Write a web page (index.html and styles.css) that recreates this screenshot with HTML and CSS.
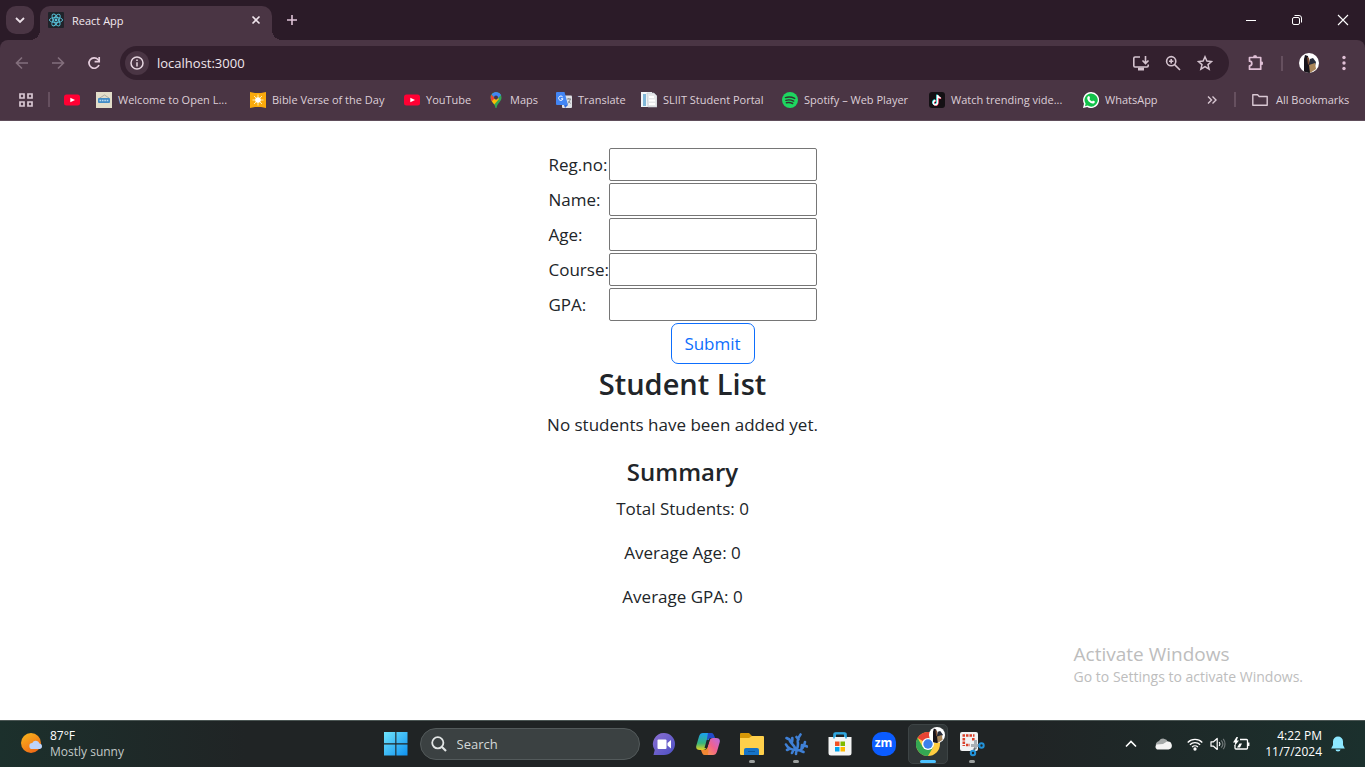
FILE: index.html
```html
<!DOCTYPE html>
<html lang="en">
<head>
<meta charset="utf-8">
<title>React App</title>
<link rel="stylesheet" href="styles.css">
</head>
<body>
<header class="browser">
  <div class="titlebar">
    <button class="tab-search" aria-label="Search tabs"><svg width="12" height="12" viewBox="0 0 12 12" fill="none" stroke="#ece0e8" stroke-width="1.800"><path d="M2 4l4 4 4-4"/></svg></button>
    <div class="tab">
      <svg width="16" height="16" viewBox="0 0 16 16"><rect width="16" height="16" rx="1" fill="#20232a"/><g fill="none" stroke="#58c4dc" stroke-width=".9"><ellipse cx="8" cy="8" rx="6.6" ry="2.6"/><ellipse cx="8" cy="8" rx="6.6" ry="2.6" transform="rotate(60 8 8)"/><ellipse cx="8" cy="8" rx="6.6" ry="2.6" transform="rotate(120 8 8)"/></g><circle cx="8" cy="8" r="1.4" fill="#58c4dc"/></svg>
      <span class="tab-title">React App</span>
      <button class="icon-btn tab-close" aria-label="Close tab"><svg width="10" height="10" viewBox="0 0 10 10" stroke="#f0e4ec" stroke-width="1.6"><path d="M1.5 1.5l7 7M8.500 1.500l-7 7"/></svg></button>
    </div>
    <button class="icon-btn new-tab" aria-label="New tab"><svg width="12" height="12" viewBox="0 0 12 12" stroke="#e0c4d8" stroke-width="1.6"><path d="M6 1v10M1 6h10"/></svg></button>
    <div class="window-controls">
      <button class="icon-btn" aria-label="Minimize"><svg width="12" height="12" viewBox="0 0 12 12" stroke="#fff"><path d="M1 6.500h10"/></svg></button>
      <button class="icon-btn" aria-label="Restore"><svg width="12" height="12" viewBox="0 0 12 12" fill="none" stroke="#fff"><rect x="1.500" y="3.500" width="7" height="7" rx="1.500"/><path d="M3.500 1.500H8a2.500 2.500 0 0 1 2.500 2.500v4.500"/></svg></button>
      <button class="icon-btn" aria-label="Close"><svg width="12" height="12" viewBox="0 0 12 12" stroke="#fff" stroke-width="1.100"><path d="M1 1l10 10M11 1L1 11"/></svg></button>
    </div>
  </div>
  <div class="toolbar">
    <button class="icon-btn nav" aria-label="Back"><svg width="16" height="16" viewBox="0 0 16 16" fill="none" stroke="#836f7d" stroke-width="1.600"><path d="M14 8H3M8 2.500L2.500 8 8 13.500"/></svg></button>
    <button class="icon-btn nav" aria-label="Forward"><svg width="16" height="16" viewBox="0 0 16 16" fill="none" stroke="#836f7d" stroke-width="1.600"><path d="M2 8h11M8 2.500L13.500 8 8 13.500"/></svg></button>
    <button class="icon-btn nav" aria-label="Reload"><svg width="16" height="16" viewBox="0 0 16 16" fill="none" stroke="#e6cede" stroke-width="1.700"><path d="M13 10A5.200 5.200 0 1 1 12 4.500L13.500 6"/><path d="M13.200 2v4.600H8.600"/></svg></button>
    <div class="omnibox">
      <button class="icon-btn site-info" aria-label="Site information"><svg width="14" height="14" viewBox="0 0 14 14" fill="none" stroke="#e6d6e0" stroke-width="1.500"><circle cx="7" cy="7" r="6"/><path d="M7 6.200V10.500M7 3.500v1.500"/></svg></button>
      <input class="address" type="text" value="localhost:3000" aria-label="Address">
      <button class="icon-btn omni-btn" aria-label="Install"><svg width="18" height="16" viewBox="0 0 18 16" fill="none" stroke="#d5c3cf" stroke-width="1.600"><path d="M8 2H3a1.200 1.200 0 0 0-1.200 1.200v7.600A1.200 1.200 0 0 0 3 12h12a1.200 1.200 0 0 0 1.200-1.200V9.500M13.500 1v7M10.500 5.500l3 3 3-3"/><path d="M6 14h6" stroke-width="3"/></svg></button>
      <button class="icon-btn omni-btn" aria-label="Zoom"><svg width="16" height="16" viewBox="0 0 16 16" fill="none" stroke="#d5c3cf" stroke-width="1.600"><circle cx="6.200" cy="6.200" r="4.600"/><path d="M9.600 9.600L15 15M6.200 4v4.400M4 6.200h4.400"/></svg></button>
      <button class="icon-btn omni-btn" aria-label="Bookmark this tab"><svg width="16" height="16" viewBox="0 0 16 16" fill="none" stroke="#d5c3cf" stroke-width="1.500"><path d="M8 1.800l1.900 4.300 4.600.4-3.500 3.100 1.100 4.600L8 11.700l-4.100 2.500L5 9.600 1.500 6.500l4.600-.4z"/></svg></button>
    </div>
    <button class="icon-btn tool" aria-label="Extensions"><svg width="18" height="18" viewBox="0 0 18 18" fill="none" stroke="#e0c0d6" stroke-width="1.700"><path d="M2.500 3.500h11.200v11.700H2.500v-3.400a2.300 2.300 0 0 0 0-4.600z" stroke-linejoin="round"/><path d="M6.300 3a1.800 1.800 0 0 1 3.600 0zM14 7.500a1.800 1.800 0 0 1 0 3.600z" fill="#e0c0d6" stroke="none"/><path d="M6.500 2.300h3M15 7.800v3" /></svg></button>
    <span class="divider"></span>
    <button class="icon-btn tool" aria-label="Profile"><svg width="20" height="20" viewBox="0 0 20 20"><clipPath id="face"><circle cx="10" cy="10" r="10"/></clipPath><g clip-path="url(#face)"><path fill="#fff" d="M0 0h20v20H0z"/><path fill="#17131a" d="M5 6l1-4 3 1 1 6 2 3-1 8H5z"/><path fill="#7b4e36" d="M8 4l2 1 1 5-2 2z"/><path fill="#282d3b" d="M11 6l3-1 3 4-1 4-6-1z"/><path fill="#a98558" d="M10 12l6-2 1 6-6 4z"/></g></svg></button>
    <button class="icon-btn tool" aria-label="Menu"><svg width="4" height="16" viewBox="0 0 4 16" fill="#e0c0d6"><circle cx="2" cy="2.500" r="1.700"/><circle cx="2" cy="8" r="1.700"/><circle cx="2" cy="13.500" r="1.700"/></svg></button>
  </div>
  <nav class="bookmarks" aria-label="Bookmarks">
    <button class="icon-btn apps" aria-label="Apps"><svg width="14" height="14" viewBox="0 0 14 14" fill="none" stroke="#d9c8d3" stroke-width="1.700"><path d="M1 1h4v4H1zM9 1h4v4H9zM1 9h4v4H1zM9 9h4v4H9z"/></svg></button>
    <span class="divider"></span>
    <div class="bookmark-list">
      <a class="bookmark" href="#" aria-label="YouTube shortcut"><svg width="16" height="16" viewBox="0 0 16 16"><rect y="2.500" width="16" height="11" rx="2.500" fill="#ff0033"/><path fill="#fff" d="M6.300 5.700L11 8l-4.700 2.300z"/></svg></a>
      <a class="bookmark" href="#"><svg width="16" height="16" viewBox="0 0 16 16"><path fill="#e2ddc9" d="M0 0h16v16H0z"/><path d="M3 6.500L8.500 3 13 6" stroke="#888" stroke-width=".6" fill="none"/><rect x="2" y="6" width="12" height="5" rx="1" fill="#418bc5"/><path d="M3.500 8.500h9" stroke="#b8d9ef" stroke-width="1.600" stroke-dasharray="1.600 .8"/></svg><span>Welcome to Open L...</span></a>
      <a class="bookmark" href="#"><svg width="16" height="16" viewBox="0 0 16 16"><path fill="#faaa0c" d="M0 0l5 1h6l5-1v16l-5-1H5l-5 1z"/><path d="M8 2.500v11M2.500 8h11M4 4l8 8M12 4l-8 8" stroke="#ffeeb0"/><circle cx="8" cy="8" r="2.800" fill="#fff"/></svg><span>Bible Verse of the Day</span></a>
      <a class="bookmark" href="#"><svg width="16" height="16" viewBox="0 0 16 16"><rect y="2.500" width="16" height="11" rx="2.500" fill="#ff0033"/><path fill="#fff" d="M6.300 5.700L11 8l-4.700 2.300z"/></svg><span>YouTube</span></a>
      <a class="bookmark" href="#"><svg width="16" height="16" viewBox="0 0 16 16"><clipPath id="pin"><path d="M8 0a5.500 5.500 0 0 1 5.500 5.500c0 4-4.200 5.500-5 10.500h-1c-.8-5-5-6.500-5-10.500A5.500 5.500 0 0 1 8 0z"/></clipPath><g clip-path="url(#pin)"><path fill="#34a853" d="M0 0h16v16H0z"/><path fill="#fbbc04" d="M2 10.500L8 4l3 3-6 7z"/><path fill="#ea4335" d="M2 2l5 4-4 4z"/><path fill="#4285f4" d="M3.500 2L8-1l6 3-6 6z"/></g><circle cx="8" cy="5.500" r="2" fill="#4a3544"/></svg><span>Maps</span></a>
      <a class="bookmark" href="#"><svg width="16" height="16" viewBox="0 0 16 16"><rect x="6" y="3.500" width="10" height="12.500" rx="1" fill="#dfe1e5"/><path fill="#3367d6" d="M8 13h4l-3 3z"/><path fill="#4285f4" d="M1 0h7.500L12 13H1a1 1 0 0 1-1-1V1a1 1 0 0 1 1-1z"/><path d="M6.700 5A2.200 2.200 0 1 0 7 6.800H5" fill="none" stroke="#fff"/><path d="M11 7h4M12.800 6v1M14.300 7c-.5 2-1.500 3.500-2.500 4.500M12.500 9l2 2.500" fill="none" stroke="#70757a" stroke-width=".8"/></svg><span>Translate</span></a>
      <a class="bookmark" href="#"><svg width="16" height="16" viewBox="0 0 16 16"><path fill="#f3f5f8" d="M0 0h11v15H0z"/><path fill="#81b7d8" d="M2 2h3v12H2z"/><path fill="#e6e8ea" stroke="#bdc5cc" stroke-width=".6" d="M6 1h7l3 3v11H7z"/><path stroke="#fff" stroke-width="2" d="M8 5h5M8 8.500h6M8 12h6"/></svg><span>SLIIT Student Portal</span></a>
      <a class="bookmark" href="#"><svg width="16" height="16" viewBox="0 0 16 16"><circle cx="8" cy="8" r="8" fill="#1ed760"/><path d="M3.400 5.600c3-1 6.500-.6 9.300.8M3.900 8.300c2.700-.8 5.400-.4 7.800.8M4.400 10.800c2.200-.6 4.300-.3 6.300.7" fill="none" stroke="#30362f" stroke-width="1.400" stroke-linecap="round"/></svg><span>Spotify – Web Player</span></a>
      <a class="bookmark" href="#"><svg width="16" height="16" viewBox="0 0 16 16"><rect width="16" height="16" rx="3" fill="#141014"/><g fill="none" stroke-width="1.500"><path d="M8 2.500v7.600a2.100 2.100 0 1 1-2-2M8 3c.5 1.700 1.700 2.500 3.200 2.600" stroke="#25f4ee"/><path d="M9 3.300v7.600a2.100 2.100 0 1 1-2-2M9 3.800c.5 1.700 1.700 2.500 3.200 2.600" stroke="#fe2c55"/><path d="M8.500 3v7.600a2.100 2.100 0 1 1-2-2M8.500 3.300c.5 1.700 1.700 2.500 3.200 2.600" stroke="#fff"/></g></svg><span>Watch trending vide...</span></a>
      <a class="bookmark" href="#"><svg width="16" height="16" viewBox="0 0 16 16"><path fill="#fff" d="M8 0a8 8 0 1 1-3.800 15L0 16l1-4.200A8 8 0 0 1 8 0z"/><path fill="#12c24a" d="M8 1.400a6.600 6.600 0 1 1-3.300 12.200L2 14.200l.6-2.600A6.600 6.600 0 0 1 8 1.400z"/><path fill="#fff" d="M5.200 4.200l1-.1.900 2-.7 1c.6 1.200 1.500 2 2.700 2.500l.9-1 1.900.9c.1 1.300-1 2.200-2.200 2.100C7 11.300 4.500 8.700 4.200 6.300c0-.9.400-1.700 1-2.100z"/></svg><span>WhatsApp</span></a>
    </div>
    <button class="icon-btn more" aria-label="More bookmarks"><svg width="10" height="8" viewBox="0 0 10 8" fill="none" stroke="#d9c8d3" stroke-width="1.400"><path d="M1 .5L4.500 4 1 7.500M5.500.5L9 4 5.500 7.500"/></svg></button>
    <span class="divider"></span>
    <a class="bookmark all" href="#"><svg width="16" height="14" viewBox="0 0 16 14" fill="none" stroke="#d9c8d3" stroke-width="1.400" stroke-linejoin="round"><path d="M.8 12.200V1.800h4.800l1.600 1.700h8v8.700z"/></svg><span>All Bookmarks</span></a>
  </nav>
</header>

<main class="page">
  <form class="student-form">
    <label for="regno">Reg.no:</label><input class="field" id="regno" type="text">
    <label for="name">Name:</label><input class="field" id="name" type="text">
    <label for="age">Age:</label><input class="field" id="age" type="text">
    <label for="course">Course:</label><input class="field" id="course" type="text">
    <label for="gpa">GPA:</label><input class="field" id="gpa" type="text">
    <button class="submit" type="button">Submit</button>
  </form>
  <h2 class="list-title">Student List</h2>
  <p class="line">No students have been added yet.</p>
  <h3 class="summary-title">Summary</h3>
  <p class="line">Total Students: 0</p>
  <p class="line">Average Age: 0</p>
  <p class="line">Average GPA: 0</p>
  <aside class="watermark">
    <div class="watermark-title">Activate Windows</div>
    <div class="watermark-text">Go to Settings to activate Windows.</div>
  </aside>
</main>

<footer class="taskbar">
  <button class="weather">
    <svg width="22" height="22" viewBox="0 0 22 22"><defs><linearGradient id="sun" x1="0" y1="0" x2=".6" y2="1"><stop stop-color="#f9b91d"/><stop offset="1" stop-color="#f06b16"/></linearGradient></defs><circle cx="10" cy="10" r="10" fill="url(#sun)"/><path fill="#bdd3f8" d="M11.500 16a3 3 0 0 1-.3-6 4 4 0 0 1 7.300.5A2.800 2.800 0 0 1 19 16z"/></svg>
    <span class="weather-text"><span>87°F</span><span class="sky">Mostly sunny</span></span>
  </button>
  <div class="apps-row">
    <button class="app" aria-label="Start"><svg width="24" height="24" viewBox="0 0 24 24"><defs><linearGradient id="win" x1="0" y1="0" x2="1" y2="1" ><stop stop-color="#6fe4fc"/><stop offset="1" stop-color="#0c8ff0"/></linearGradient><mask id="panes"><path fill="#fff" d="M0 0h11.300v11.300H0zM12.400 0h11.100v11.300H12.400zM0 12.400h11.300v11.100H0zM12.400 12.400h11.100v11.100H12.400z"/></mask></defs><rect width="24" height="24" fill="url(#win)" mask="url(#panes)"/></svg></button>
    <label class="search"><svg width="16" height="16" viewBox="0 0 16 16" fill="none" stroke="#e2e5e5" stroke-width="1.800"><circle cx="6.800" cy="6.800" r="5.600"/><path d="M11 11l4 4" stroke-width="2.200"/></svg><input class="search-input" type="text" placeholder="Search" aria-label="Search"></label>
    <button class="app" aria-label="Chat"><svg width="24" height="24" viewBox="0 0 24 24"><defs><linearGradient id="chat" x1="0" y1="0" x2="1" y2="1"><stop stop-color="#8c6fd1"/><stop offset="1" stop-color="#4b50c4"/></linearGradient></defs><path fill="url(#chat)" d="M12 1a11 11 0 1 1 0 22H1.500l1.200-5A11 11 0 0 1 12 1z"/><rect x="5.500" y="7.500" width="9" height="9.500" rx="1" fill="#fff"/><path fill="#fff" d="M15.500 11l3.500-3v8.500l-3.500-3z"/></svg></button>
    <button class="app" aria-label="Copilot"><svg width="24" height="24" viewBox="0 0 24 24"><defs><linearGradient id="cpl" x1="0" y1="0" x2="0" y2="1"><stop stop-color="#1aa0f0"/><stop offset=".6" stop-color="#37b47c"/><stop offset="1" stop-color="#e6d321"/></linearGradient><linearGradient id="cpr" x1="1" y1="0" x2="0" y2="1"><stop stop-color="#b66be8"/><stop offset=".5" stop-color="#f0618d"/><stop offset="1" stop-color="#fba14c"/></linearGradient></defs><path fill="url(#cpl)" d="M7 1h8l-4.500 14c-.5 2-1.500 3-3.500 3H4c-3.500 0-4.500-2-3.500-5L3 4.500C3.700 2 5 1 7 1z"/><path fill="#224bc9" d="M12 1h3.500c1.700 0 2.200 1.500 2.800 3l.8 2h-4c-2 0-3 1-3.500 3l-2 6z"/><path fill="url(#cpr)" d="M17 23H9l4.500-14c.5-2 1.500-3 3.500-3h3c3.500 0 4.500 2 3.500 5L21 19.500c-.7 2.500-2 3.500-4 3.500z"/><path fill="#f18733" d="M12 23H8.500c-1.700 0-2.200-1.500-2.800-3L5 18h3c2 0 3-1 3.500-3l1 3z"/><path fill="#20262b" d="M10.700 8h3l-2.600 8H8.500z"/></svg></button>
    <button class="app running" aria-label="File Explorer"><svg width="24" height="24" viewBox="0 0 24 24"><path fill="#d69707" d="M1 1h8l3 3v5H0V2a1 1 0 0 1 1-1z"/><path fill="#ffd04b" d="M0 6h9l3-2h11a1 1 0 0 1 1 1v17a1 1 0 0 1-1 1H1a1 1 0 0 1-1-1z"/><path fill="#1673c7" d="M4 23v-5a2 2 0 0 1 2-2h11a2 2 0 0 1 2 2v5z"/><path stroke="#0d569d" d="M8 19.500h7"/></svg></button>
    <button class="app running" aria-label="Coral"><svg width="24" height="24" viewBox="0 0 24 24" fill="none" stroke="#3f80d6" stroke-width="2.600" stroke-linecap="round" stroke-linejoin="round"><path d="M12 22c0-2 .2-3 1-5s1.300-4 .8-7c-.2-2 .7-5 2.700-7.500M12.500 18c-5 0-8.500-1.500-10.500-5.500M11.500 17.500C10.500 12 6 12 5.500 7.500L2.500 6M7.500 11c1-1.500 1-3 .8-5M6 16.500L3 18M13 18.500c5 0 7-2.500 8-8.500M20.500 13.500l2.500 1M17.500 17l.5-4M14.500 7.500L12.500 5M16 18.500l3.500 1.500M9.500 18L8 21"/></svg></button>
    <button class="app" aria-label="Microsoft Store"><svg width="24" height="24" viewBox="0 0 24 24"><path d="M7 6V3a1.500 1.500 0 0 1 1.500-1.500h7A1.500 1.500 0 0 1 17 3v3" fill="none" stroke="#30a7df" stroke-width="2"/><path fill="#f4f5f5" d="M.5 5h23v16a2.500 2.500 0 0 1-2.500 2.500H3A2.500 2.500 0 0 1 .5 21z"/><path d="M6 6.500V2.200A1.200 1.200 0 0 1 7.200 1h9.600A1.200 1.200 0 0 1 18 2.200v4.300" fill="none" stroke="#30a7df" stroke-width="1.600"/><path fill="#f25022" d="M7 9.500h4.500V14H7z"/><path fill="#7fba00" d="M12.500 9.500H17V14h-4.500z"/><path fill="#00a4ef" d="M7 15h4.500v4.500H7z"/><path fill="#ffb900" d="M12.500 15H17v4.500h-4.500z"/></svg></button>
    <button class="app" aria-label="Zoom"><span class="zoom-logo">zm</span></button>
    <button class="app active" aria-label="Google Chrome"><svg width="24" height="24" viewBox="0 0 24 24"><circle cx="12" cy="12" r="12" fill="#ffcd40"/><path fill="#e84335" d="M12 12L1.600 6A12 12 0 0 1 22.400 6H12z"/><path fill="#34a853" d="M1.600 6A12 12 0 0 0 12 24l5.200-9L12 12 6.800 15z"/><circle cx="12" cy="12" r="6" fill="#fff"/><circle cx="12" cy="12" r="4.700" fill="#3b80ea"/></svg><svg class="badge" width="16" height="16" viewBox="0 0 20 20"><g clip-path="url(#face)"><path fill="#fff" d="M0 0h20v20H0z"/><path fill="#17131a" d="M5 6l1-4 3 1 1 6 2 3-1 8H5z"/><path fill="#7b4e36" d="M8 4l2 1 1 5-2 2z"/><path fill="#282d3b" d="M11 6l3-1 3 4-1 4-6-1z"/><path fill="#a98558" d="M10 12l6-2 1 6-6 4z"/></g></svg></button>
    <button class="app running" aria-label="Snipping Tool"><svg width="26" height="26" viewBox="0 0 26 26"><rect x="1" y="1" width="18" height="19" rx="2" fill="#f1f3f4"/><path d="M3.500 4.500h12M4.800 7v8M14.300 7v3M7 14h4" fill="none" stroke="#d9402a" stroke-width="2.600" stroke-dasharray="2.500 1"/><path d="M16.500 9v9M12 14.500h8" stroke="#aab0b5" stroke-width="3"/><path d="M16 17l-1 2M19 14.500l2 .5" stroke="#697177" stroke-width="2"/><circle cx="14" cy="22" r="2.200" fill="none" stroke="#2292d9" stroke-width="2"/><circle cx="22.500" cy="14.500" r="2.200" fill="none" stroke="#2292d9" stroke-width="2"/></svg></button>
  </div>
  <div class="tray">
    <button class="icon-btn tray-btn" aria-label="Show hidden icons"><svg width="12" height="8" viewBox="0 0 12 8" fill="none" stroke="#fff" stroke-width="1.600"><path d="M1 6.500l5-5 5 5"/></svg></button>
    <button class="icon-btn tray-btn" aria-label="OneDrive"><svg width="17" height="12" viewBox="0 0 17 12"><path fill="#a5a9a9" d="M1 8a4 4 0 0 1 3-5 5 5 0 0 1 9 1l-6 4z"/><path fill="#f4f4f4" d="M2 11.500A3.500 3.500 0 0 1 1.500 6.500L8 6l4-2.500a4 4 0 0 1 1.500 8z"/></svg></button>
    <button class="icon-btn status" aria-label="Network, volume and battery">
      <svg width="16" height="14" viewBox="0 0 16 14" fill="none" stroke="#fff" stroke-width="1.300"><path d="M.7 5.500a10.300 10.300 0 0 1 14.600 0M2.900 7.800a7.200 7.200 0 0 1 10.200 0M5.100 10a4.200 4.200 0 0 1 5.800 0"/><circle cx="8" cy="12" r="1" fill="#fff"/></svg>
      <svg width="16" height="14" viewBox="0 0 16 14" fill="none" stroke="#fff" stroke-width="1.200"><path d="M1 4.800h2.500L7.200 1.500v11L3.500 9.200H1z" stroke-linejoin="round"/><path d="M9.200 5c1 1.300 1 2.700 0 4"/><path d="M11.200 3.300c2 2.200 2 5.200 0 7.400M13.200 1.800c2.400 3 2.400 7.400 0 10.400" stroke="#6f7777"/></svg>
      <svg width="17" height="14" viewBox="0 0 17 14" fill="none" stroke="#fff" stroke-width="1.300"><path d="M7 2.500h6.500a1 1 0 0 1 1 1v7.500a1 1 0 0 1-1 1H3a1 1 0 0 1-1-1V8M15.800 5.500v3.500"/><path fill="#fff" stroke="none" d="M3.500 0L0 5.500h2.200L1.500 9 6 3.500H3.800L5 0zM4 10.500l2.500-4h2.500l-2 4z"/></svg>
    </button>
    <button class="clock"><span>4:22 PM</span><span>11/7/2024</span></button>
    <button class="icon-btn" aria-label="Notifications"><svg width="14" height="16" viewBox="0 0 14 16" fill="#8de8ff"><path d="M7 .5a5 5 0 0 1 5 5V9l1.800 3.500H.2L2 9V5.500a5 5 0 0 1 5-5zM4.500 13.500h5a2.500 2 0 0 1-5 0z"/></svg></button>
  </div>
</footer>
</body>
</html>
```
FILE: styles.css
```css
* { box-sizing: border-box; }

body {
  margin: 0;
  min-height: 100vh;
  display: flex;
  flex-direction: column;
  background: #fff;
  color: #212529;
  font-family: "Segoe UI", "Open Sans", "Noto Sans", sans-serif;
  font-size: 17px;
}

button, input { font-family: inherit; }
svg { display: block; flex: none; }

.icon-btn {
  display: flex;
  align-items: center;
  justify-content: center;
  padding: 0;
  border: 0;
  background: none;
}

.browser {
  background: #2b1b28;
  font-size: 11px;
}

.titlebar {
  display: flex;
  height: 40px;
  padding: 6px 0 0 6px;
}

.tab-search {
  display: flex;
  align-items: center;
  justify-content: center;
  width: 28px;
  height: 28px;
  margin-right: 6px;
  padding: 0;
  border: 0;
  border-radius: 10px;
  background: #4a3544;
}

.tab {
  position: relative;
  display: flex;
  align-items: center;
  gap: 8px;
  width: 232px;
  padding: 0 6px 6px 8px;
  border-radius: 10px 10px 0 0;
  background: #4a3544;
}

.tab::before,
.tab::after {
  content: "";
  position: absolute;
  bottom: 0;
  width: 10px;
  height: 10px;
}

.tab::before {
  right: 100%;
  background: radial-gradient(circle at 0 0, transparent 10px, #4a3544 10px);
}

.tab::after {
  left: 100%;
  background: radial-gradient(circle at 100% 0, transparent 10px, #4a3544 10px);
}

.tab-title {
  flex: 1;
  color: #f3e9f0;
}

.tab-close { width: 20px; height: 20px; }
.new-tab { width: 28px; height: 28px; margin-left: 6px; }

.window-controls {
  display: flex;
  margin-left: auto;
  height: 28px;
}

.window-controls .icon-btn {
  width: 46px;
}

.window-controls .icon-btn:last-child { width: 45px; }

.toolbar {
  display: flex;
  align-items: center;
  height: 46px;
  padding: 0 4px;
  border-radius: 8px 8px 0 0;
  background: #4a3544;
}

.nav { width: 36px; height: 34px; }

.omnibox {
  display: flex;
  flex: 1;
  align-items: center;
  height: 34px;
  margin: 0 9px 0 8px;
  padding: 0 8px 0 5px;
  border-radius: 17px;
  background: #33202e;
}

.site-info {
  width: 24px;
  height: 24px;
  border-radius: 12px;
  background: #4a3544;
}

.address {
  flex: 1;
  min-width: 0;
  padding: 0 8px;
  border: 0;
  background: none;
  color: #f0e6ed;
  font-size: 13px;
}

.omni-btn { width: 32px; height: 32px; }
.tool { width: 35px; height: 34px; }

.divider {
  width: 2px;
  height: 15px;
  background: #66505f;
}

.toolbar .divider { margin: 0 8px; }

.bookmarks {
  display: flex;
  align-items: center;
  height: 35px;
  padding: 0 13px 7px 16px;
  border-bottom: 1px solid #5f4d5a;
  background: #4a3544;
}

.apps { width: 20px; height: 28px; margin-right: 12px; }

.bookmark-list {
  display: grid;
  flex: 1;
  grid-template-columns: 32px 154px 154px 84px 68px 85px 141px 147px 154px 90px;
  margin-left: 14px;
}

.bookmark {
  display: flex;
  align-items: center;
  gap: 6px;
  color: #ddcfd8;
  text-decoration: none;
  white-space: nowrap;
}

.more { width: 20px; height: 28px; }
.bookmarks .more + .divider { margin: 0 16px 0 12px; }
.bookmark.all { gap: 8px; min-width: 100px; }

.page {
  position: relative;
  display: flex;
  flex: 1;
  flex-direction: column;
  align-items: center;
  padding-top: 27px;
}

.student-form {
  display: grid;
  grid-template-columns: 58px 208px;
  gap: 2px;
  align-items: center;
}

.field {
  height: 33px;
  padding: 1px 2px;
  border: 1px solid #767676;
  border-radius: 2px;
  background: #fff;
  font-size: 17px;
}

.submit {
  grid-column: 2;
  justify-self: center;
  width: 84px;
  height: 41px;
  padding: 0;
  border: 1px solid #0d6efd;
  border-radius: 7px;
  background: #fff;
  color: #0d6efd;
  font-size: 17px;
}

.list-title,
.summary-title {
  margin: 0 0 8px;
  font-weight: 600;
}

.list-title { font-size: 29px; line-height: 40px; }
.summary-title { font-size: 24px; line-height: 32px; }

.line {
  margin: 0 0 18px;
  line-height: 26px;
}

.watermark {
  position: absolute;
  right: 62px;
  bottom: 33px;
  color: #bdbdbd;
}

.watermark-title { font-size: 19px; line-height: 26px; }
.watermark-text { font-size: 14px; line-height: 20px; }

.taskbar {
  display: grid;
  grid-template-columns: 1fr auto 1fr;
  height: 47px;
  border-top: 1px solid #4b5654;
  background: linear-gradient(90deg, #1c302c, #202425 18%, #202425 75%, #1b302d);
  color: #fff;
  font-size: 12px;
}

.weather {
  display: flex;
  align-items: center;
  gap: 7px;
  padding: 0 0 0 21px;
  border: 0;
  background: none;
  color: #fff;
  font-size: 12px;
  line-height: 16px;
  text-align: left;
}

.weather-text,
.clock {
  display: flex;
  flex-direction: column;
}

.sky { color: #c3c9c8; }

.apps-row {
  display: flex;
  align-items: center;
  padding-left: 2px;
}

.app {
  position: relative;
  display: flex;
  align-items: center;
  justify-content: center;
  width: 44px;
  height: 46px;
  padding: 0;
  border: 0;
  background: none;
}

.search {
  display: flex;
  align-items: center;
  gap: 10px;
  width: 220px;
  height: 32px;
  margin: 0 2px;
  padding: 0 12px 0 10px;
  border: 1px solid #535a5b;
  border-radius: 16px;
  background: #3b4142;
}

.search-input {
  flex: 1;
  min-width: 0;
  padding: 0;
  border: 0;
  background: none;
  color: #fff;
  font-size: 13px;
}

.search-input::placeholder { color: #d4d8d8; opacity: 1; }

.running::after,
.active::after {
  content: "";
  position: absolute;
  bottom: 4px;
  left: 50%;
  width: 6px;
  height: 3px;
  border-radius: 2px;
  background: #9a9f9f;
  transform: translateX(-50%);
}

.active {
  width: 40px;
  height: 40px;
  margin: 0 2px;
  border: 1px solid #3d4445;
  border-radius: 5px;
  background: #303637;
}

.active::after {
  bottom: 0;
  width: 16px;
  background: #4cc2ff;
}

.badge {
  position: absolute;
  top: 2px;
  right: 2px;
}

.zoom-logo {
  width: 24px;
  height: 24px;
  border-radius: 10px;
  background: #0b5cff;
  color: #fff;
  font-size: 12px;
  font-weight: 700;
  line-height: 22px;
}

.tray {
  display: flex;
  align-items: center;
  justify-content: flex-end;
  padding-right: 20px;
}

.tray-btn { width: 32px; height: 40px; }
.status { gap: 7px; height: 40px; margin: 0 15px 0 8px; }

.clock {
  align-items: flex-end;
  margin-right: 9px;
  padding: 0;
  border: 0;
  background: none;
  color: #fff;
  font-size: 12px;
  line-height: 16px;
}
```
